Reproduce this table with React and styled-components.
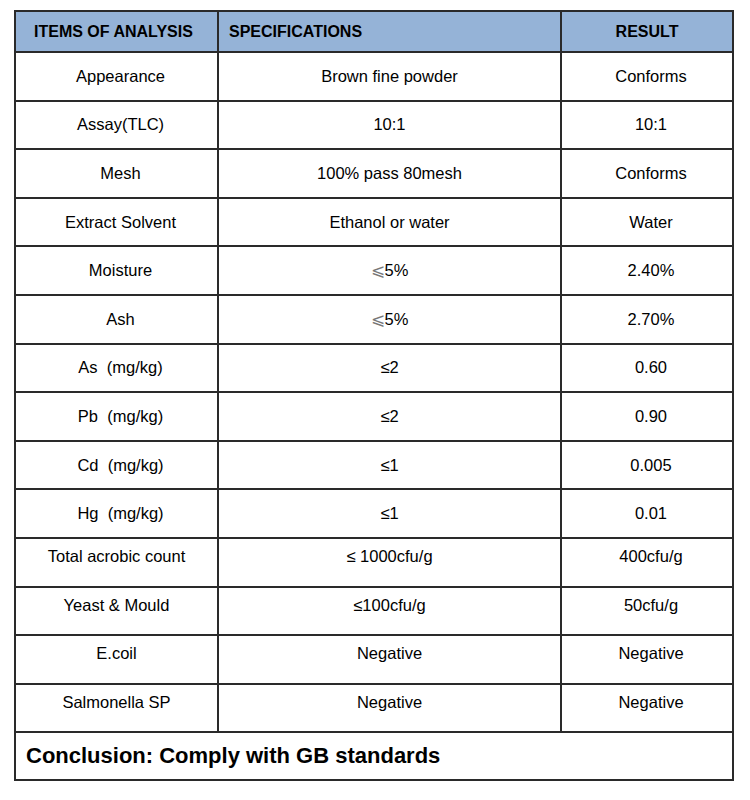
import React from "react";
import styled, { createGlobalStyle } from "styled-components";

const GlobalStyle = createGlobalStyle`
  body {
    margin: 0;
    background: #ffffff;
    font-family: "Liberation Sans", Arial, sans-serif;
    color: #000;
  }
`;

const Page = styled.div`
  padding: 10px 0 0 14px;
`;

const Table = styled.table`
  width: 718px;
  border-collapse: collapse;
  table-layout: fixed;
  border: 2px solid #2a2a2a;
`;

const Col = styled.col`
  width: ${(props) => props.w}px;
`;

const HeadCell = styled.th`
  height: 39px;
  padding: 0 0 0 ${(props) => props.pad || 0}px;
  background-color: #95b3d7;
  border: 2px solid #2a2a2a;
  font-size: 16px;
  font-weight: bold;
  text-align: ${(props) => props.align || "left"};
  vertical-align: middle;
`;

const Cell = styled.td`
  height: 48.6px;
  padding: 0 0 ${(props) => (props.raised ? 11 : 0)}px
    ${(props) => (props.shift ? 8 : 0)}px;
  border: 2px solid #2a2a2a;
  font-size: 16.5px;
  text-align: center;
  vertical-align: middle;
  box-sizing: border-box;
`;

const ConclusionCell = styled.td`
  height: 46px;
  padding: 0 0 0 10px;
  border: 2px solid #2a2a2a;
  font-size: 22px;
  font-weight: bold;
  text-align: left;
  vertical-align: middle;
`;

const Slant = styled.span`
  font-family: "DejaVu Sans", sans-serif;
  color: #777;
  font-weight: 300;
`;

const le = <Slant>⩽</Slant>;

const rows = [
  ["Appearance", "Brown fine powder", "Conforms"],
  ["Assay(TLC)", "10:1", "10:1"],
  ["Mesh", "100% pass 80mesh", "Conforms"],
  ["Extract Solvent", "Ethanol or water", "Water"],
  ["Moisture", <>{le}5%</>, "2.40%"],
  ["Ash", <>{le}5%</>, "2.70%"],
  ["As\u00a0 (mg/kg)", "≤2", "0.60"],
  ["Pb\u00a0 (mg/kg)", "≤2", "0.90"],
  ["Cd\u00a0 (mg/kg)", "≤1", "0.005"],
  ["Hg\u00a0 (mg/kg)", "≤1", "0.01"],
  ["Total acrobic count", "≤ 1000cfu/g", "400cfu/g", true],
  ["Yeast & Mould", "≤100cfu/g", "50cfu/g", true],
  ["E.coil", "Negative", "Negative", true],
  ["Salmonella SP", "Negative", "Negative", true],
];

export default function App() {
  return (
    <Page>
      <GlobalStyle />
      <Table>
        <colgroup>
          <Col w={203} />
          <Col w={343} />
          <Col w={172} />
        </colgroup>
        <thead>
          <tr>
            <HeadCell pad={18}>ITEMS OF ANALYSIS</HeadCell>
            <HeadCell pad={10}>SPECIFICATIONS</HeadCell>
            <HeadCell align="center">RESULT</HeadCell>
          </tr>
        </thead>
        <tbody>
          {rows.map(([item, spec, result, raised], i) => (
            <tr key={i}>
              <Cell raised={raised} shift={!raised}>
                {item}
              </Cell>
              <Cell raised={raised}>{spec}</Cell>
              <Cell raised={raised} shift>
                {result}
              </Cell>
            </tr>
          ))}
          <tr>
            <ConclusionCell colSpan={3}>
              Conclusion: Comply with GB standards
            </ConclusionCell>
          </tr>
        </tbody>
      </Table>
    </Page>
  );
}
